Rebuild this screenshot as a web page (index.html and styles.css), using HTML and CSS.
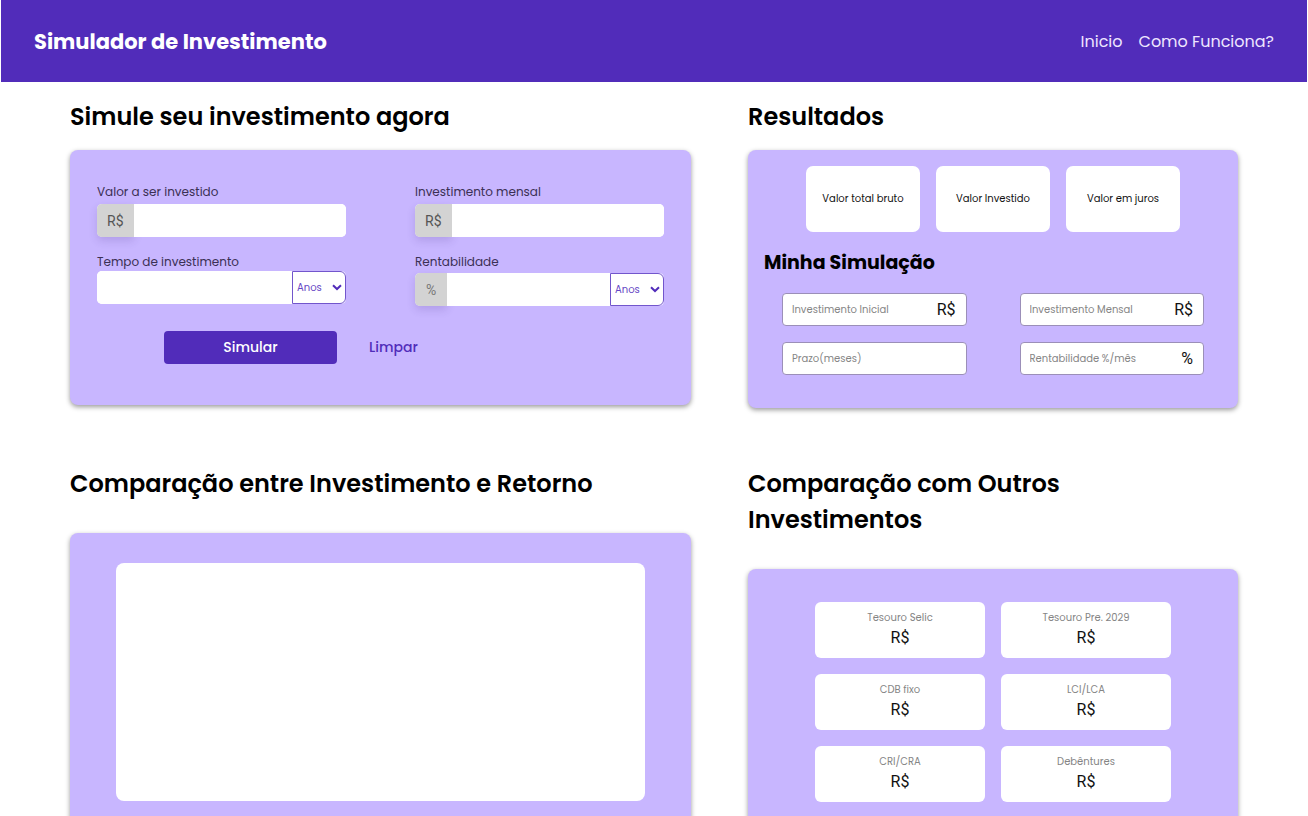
FILE: index.html
```html
<!DOCTYPE html>
<html lang="pt-BR">
<head>
  <meta charset="utf-8">
  <meta name="viewport" content="width=device-width, initial-scale=1">
  <title>Simulador de Investimento</title>
  <link rel="stylesheet" href="styles.css">
</head>
<body>
  <header class="header">
    <h1 class="header-title">Simulador de Investimento</h1>
    <nav class="nav">
      <a class="nav-link" href="#inicio">Inicio</a>
      <a class="nav-link" href="#como-funciona">Como Funciona?</a>
    </nav>
  </header>

  <main class="page">
    <section class="section">
      <h2 class="section-title">Simule seu investimento agora</h2>
      <form class="card form">
        <div class="form-grid">
          <div class="field">
            <label class="label" for="valor">Valor a ser investido</label>
            <div class="control">
              <span class="prefix">R$</span>
              <input class="control-input" id="valor" type="text">
            </div>
          </div>
          <div class="field">
            <label class="label" for="mensal">Investimento mensal</label>
            <div class="control">
              <span class="prefix">R$</span>
              <input class="control-input" id="mensal" type="text">
            </div>
          </div>
          <div class="field field-flush">
            <label class="label" for="tempo">Tempo de investimento</label>
            <div class="control">
              <input class="control-input" id="tempo" type="text">
              <div class="unit">
                <select class="unit-select" aria-label="Unidade do tempo"><option>Anos</option><option>Meses</option></select>
                <svg class="unit-arrow" viewBox="0 0 10 7" aria-hidden="true"><path d="M1 1.2 5 5 9 1.2"/></svg>
              </div>
            </div>
          </div>
          <div class="field field-close">
            <label class="label" for="rentabilidade">Rentabilidade</label>
            <div class="control">
              <span class="prefix prefix-light">%</span>
              <input class="control-input" id="rentabilidade" type="text">
              <div class="unit">
                <select class="unit-select" aria-label="Unidade da rentabilidade"><option>Anos</option><option>Meses</option></select>
                <svg class="unit-arrow" viewBox="0 0 10 7" aria-hidden="true"><path d="M1 1.2 5 5 9 1.2"/></svg>
              </div>
            </div>
          </div>
        </div>
        <div class="actions">
          <button class="button button-primary" type="button">Simular</button>
          <button class="button button-text" type="reset">Limpar</button>
        </div>
      </form>
    </section>

    <section class="section">
      <h2 class="section-title">Resultados</h2>
      <div class="card results">
        <div class="stats">
          <div class="stat">Valor total bruto</div>
          <div class="stat">Valor Investido</div>
          <div class="stat">Valor em juros</div>
        </div>
        <h3 class="results-title">Minha Simulação</h3>
        <div class="summary">
          <div class="summary-item">
            <input class="summary-input" type="text" placeholder="Investimento Inicial" aria-label="Investimento Inicial" readonly>
            <span class="amount">R$</span>
          </div>
          <div class="summary-item">
            <input class="summary-input" type="text" placeholder="Investimento Mensal" aria-label="Investimento Mensal" readonly>
            <span class="amount">R$</span>
          </div>
          <div class="summary-item">
            <input class="summary-input" type="text" placeholder="Prazo(meses)" aria-label="Prazo em meses" readonly>
          </div>
          <div class="summary-item">
            <input class="summary-input" type="text" placeholder="Rentabilidade %/mês" aria-label="Rentabilidade ao mês" readonly>
            <span class="amount">%</span>
          </div>
        </div>
      </div>
    </section>

    <section class="section section-spaced">
      <h2 class="section-title">Comparação entre Investimento e Retorno</h2>
      <div class="card chart-card">
        <div class="chart"></div>
      </div>
    </section>

    <section class="section section-spaced">
      <h2 class="section-title">Comparação com Outros Investimentos</h2>
      <div class="card options">
        <div class="option"><span class="option-name">Tesouro Selic</span><span class="amount">R$</span></div>
        <div class="option"><span class="option-name">Tesouro Pre. 2029</span><span class="amount">R$</span></div>
        <div class="option"><span class="option-name">CDB fixo</span><span class="amount">R$</span></div>
        <div class="option"><span class="option-name">LCI/LCA</span><span class="amount">R$</span></div>
        <div class="option"><span class="option-name">CRI/CRA</span><span class="amount">R$</span></div>
        <div class="option"><span class="option-name">Debêntures</span><span class="amount">R$</span></div>
      </div>
    </section>
  </main>
</body>
</html>
```
FILE: styles.css
```css
:root {
  --purple: #512cba;
  --lilac: #c8b6ff;
}

* {
  box-sizing: border-box;
}

body {
  margin: 0;
  background: #fff;
  color: #000;
  font-family: Poppins, Inter, "Open Sans", sans-serif;
}

input,
select,
button {
  font-family: inherit;
}

.header {
  display: flex;
  align-items: center;
  justify-content: space-between;
  margin: 0 1px;
  padding: 25px 33px 23px;
  background: var(--purple);
  color: #fff;
}

.header-title {
  margin: 0;
  font-size: 21px;
  line-height: 34px;
  font-weight: 700;
}

.nav {
  display: flex;
  gap: 16px;
}

.nav-link {
  color: #eee6ff;
  font-size: 16px;
  line-height: 24px;
  text-decoration: none;
}

.page {
  display: grid;
  grid-template-columns: minmax(0, 621fr) minmax(0, 490fr);
  align-items: start;
  column-gap: 57px;
  row-gap: 58px;
  padding: 17px 70px 32px;
}

.section {
  display: flex;
  flex-direction: column;
  gap: 15px;
}

.section-spaced {
  gap: 31px;
}

.section-title {
  margin: 0;
  font-size: 24px;
  line-height: 36px;
  font-weight: 600;
}

.card {
  border-radius: 8px;
  background: var(--lilac);
  box-shadow: 0 2px 5px rgba(0, 0, 0, 0.4);
}

.form {
  padding: 33px 27px 41px;
}

.form-grid {
  display: grid;
  grid-template-columns: minmax(0, 1fr) minmax(0, 1fr);
  align-items: start;
  gap: 16px 69px;
}

.field {
  display: flex;
  flex-direction: column;
  gap: 3px;
}

.field-flush {
  gap: 0;
}

.field-close {
  gap: 2px;
}

.label {
  color: #3b3054;
  font-size: 12px;
  line-height: 18px;
}

.control {
  display: flex;
  height: 33px;
  border-radius: 5px;
  background: #fff;
}

.prefix {
  display: flex;
  align-items: center;
  padding: 0 10px;
  border-radius: 5px 0 0 5px;
  background: #d3d3d3;
  box-shadow: 0 4px 8px rgba(60, 40, 120, 0.16);
  color: #555;
  font-family: Roboto, sans-serif;
  font-size: 14px;
}

.prefix-light {
  padding: 0 11px;
  color: #777;
}

.control-input {
  flex: 1;
  min-width: 0;
  padding: 0 8px;
  border: 0;
  border-radius: 5px;
  background: #fff;
  font-size: 12px;
}

.prefix + .control-input {
  border-radius: 0 5px 5px 0;
}

.unit {
  display: grid;
  align-items: center;
  width: 54px;
}

.unit-select,
.unit-arrow {
  grid-area: 1 / 1;
}

.unit-select {
  appearance: none;
  width: 100%;
  height: 100%;
  padding: 0 4px;
  border: 1px solid #7256cc;
  border-radius: 0 6px 6px 0;
  background: #fff;
  color: #6546c4;
  font-size: 10px;
}

.unit-arrow {
  justify-self: end;
  width: 10px;
  height: 7px;
  margin-right: 4px;
  fill: none;
  stroke: var(--purple);
  stroke-width: 2;
  pointer-events: none;
}

.actions {
  display: flex;
  gap: 16px;
  padding: 25px 67px 0;
}

.button {
  height: 33px;
  border: 0;
  border-radius: 4px;
  font-size: 14px;
  font-weight: 500;
}

.button-primary {
  width: 173px;
  background: var(--purple);
  color: #fff;
}

.button-text {
  padding: 0 16px;
  background: transparent;
  color: var(--purple);
}

.results {
  padding: 16px 16px 33px;
}

.stats {
  display: flex;
  justify-content: center;
  gap: 16px;
}

.stat {
  display: flex;
  align-items: center;
  justify-content: center;
  width: 114px;
  height: 66px;
  border-radius: 7px;
  background: #fff;
  color: #111;
  font-size: 10px;
}

.results-title {
  margin: 16px 0 15px;
  font-size: 19px;
  line-height: 30px;
  font-weight: 700;
}

.summary {
  display: grid;
  grid-template-columns: minmax(0, 1fr) minmax(0, 1fr);
  gap: 16px 53px;
  padding: 0 18px;
}

.summary-item {
  display: flex;
  align-items: center;
  height: 33px;
  padding: 0 10px 0 9px;
  border: 1px solid #9b8fb8;
  border-radius: 4px;
  background: #fff;
}

.summary-input {
  flex: 1;
  min-width: 0;
  padding: 0;
  border: 0;
  background: transparent;
  font-size: 10px;
}

.summary-input::placeholder {
  color: #858585;
  opacity: 1;
}

.amount {
  color: #111;
  font-family: Roboto, sans-serif;
  font-size: 16px;
  line-height: 20px;
}

.chart-card {
  padding: 30px 46px;
}

.chart {
  height: 238px;
  border-radius: 8px;
  background: #fff;
}

.options {
  display: grid;
  grid-template-columns: 170px 170px;
  justify-content: center;
  gap: 16px;
  padding: 33px 16px;
}

.option {
  display: flex;
  flex-direction: column;
  align-items: center;
  gap: 2px;
  padding: 8px 8px 10px;
  border-radius: 6px;
  background: #fff;
}

.option-name {
  color: #858585;
  font-size: 10px;
  line-height: 16px;
}
```
